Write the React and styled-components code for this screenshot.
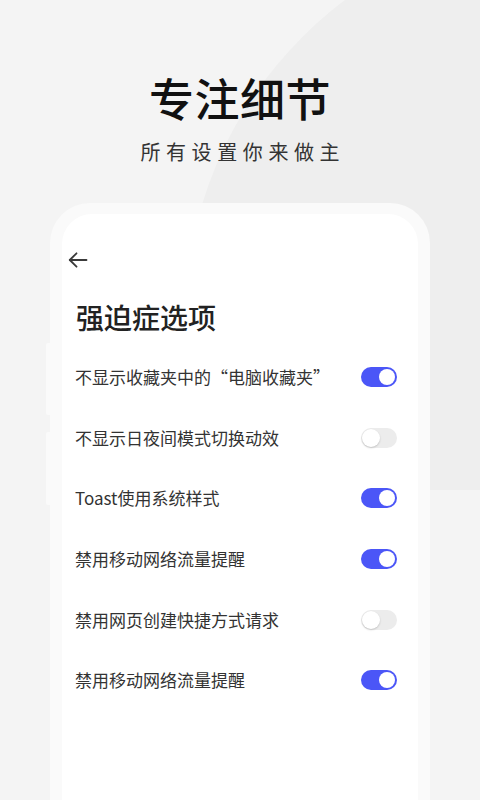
import styled, { createGlobalStyle } from 'styled-components'

const GlobalStyle = createGlobalStyle`
  html, body {
    margin: 0;
    padding: 0;
    background: #f4f4f4;
  }
  body {
    font-family: "Noto Sans CJK SC", "Noto Sans", sans-serif;
    -webkit-font-smoothing: antialiased;
  }
`

const Page = styled.div`
  position: relative;
  width: 480px;
  height: 800px;
  overflow: hidden;
  background: #f4f4f4;
  display: flex;
  flex-direction: column;
`

// big soft circle behind the header, cut flat at its lower end
const Backdrop = styled.div`
  position: absolute;
  top: 0;
  left: 0;
  width: 480px;
  height: 490px;
  overflow: hidden;
  pointer-events: none;

  &::before {
    content: '';
    position: absolute;
    left: 185px;
    top: -80px;
    width: 800px;
    height: 800px;
    border-radius: 50%;
    background: #eeeeee;
  }
`

const Hero = styled.header`
  position: relative;
  display: flex;
  flex-direction: column;
  align-items: center;
  padding-top: 75px;
`

const Title = styled.h1`
  margin: 0;
  font-size: 45px;
  line-height: 45px;
  font-weight: 500;
  color: #111;
  letter-spacing: 0.5px;
`

const Subtitle = styled.p`
  margin: 22px 0 0;
  font-size: 20px;
  line-height: 20px;
  color: #333;
  letter-spacing: 5.6px;
  padding-left: 5.6px;
`

const PhoneFrame = styled.div`
  position: relative;
  flex: 1;
  margin: 41px 50px 0;
  padding: 11px 12px 0;
  background: #fafafa;
  border-radius: 40px 40px 0 0;
  display: flex;

  &::before,
  &::after {
    content: '';
    position: absolute;
    left: -4px;
    width: 4px;
    background: #fafafa;
    border-radius: 2px 0 0 2px;
  }
  &::before {
    top: 140px;
    height: 72px;
  }
  &::after {
    top: 229px;
    height: 73px;
  }
`

const Screen = styled.div`
  flex: 1;
  background: #fff;
  border-radius: 30px 30px 0 0;
  padding: 38px 21px 0 13px;
  display: flex;
  flex-direction: column;
`

const BackButton = styled.button`
  align-self: flex-start;
  display: flex;
  margin: 0 0 0 -7px;
  padding: 0;
  border: 0;
  background: none;
  color: #3a3a3a;
  cursor: pointer;
`

const Heading = styled.h2`
  margin: 35px 0 16px 1px;
  font-size: 28px;
  line-height: 28px;
  font-weight: 500;
  color: #222;
`

const Row = styled.div`
  display: flex;
  align-items: center;
  justify-content: space-between;
  height: 60.6px;
`

const Label = styled.span`
  font-size: 17px;
  line-height: 20px;
  color: #333;
`

const Track = styled.button`
  position: relative;
  width: 36px;
  height: 20px;
  padding: 0;
  border: 0;
  border-radius: 10px;
  background: ${p => (p.$on ? '#4b56f7' : '#ececec')};
  cursor: pointer;
  flex-shrink: 0;
`

const Knob = styled.span`
  position: absolute;
  top: ${p => (p.$on ? '2px' : '1px')};
  left: ${p => (p.$on ? '18px' : '1px')};
  width: ${p => (p.$on ? '16px' : '18px')};
  height: ${p => (p.$on ? '16px' : '18px')};
  border-radius: 50%;
  background: #fff;
  box-shadow: ${p => (p.$on ? 'none' : '0 1px 2px rgba(0,0,0,0.18)')};
`

const options = [
  { label: '不显示收藏夹中的“电脑收藏夹”', on: true },
  { label: '不显示日夜间模式切换动效', on: false },
  { label: 'Toast使用系统样式', on: true },
  { label: '禁用移动网络流量提醒', on: true },
  { label: '禁用网页创建快捷方式请求', on: false },
  { label: '禁用移动网络流量提醒', on: true },
]

const BackArrow = () => (
  <svg width="20" height="16" viewBox="0 0 20 16" fill="none" stroke="currentColor" strokeWidth="1.8" strokeLinecap="round" strokeLinejoin="round">
    <path d="M18.5 8H1.8" />
    <path d="M8.5 1.3L1.8 8l6.7 6.7" />
  </svg>
)

const App = () => {
  return (
    <Page>
      <GlobalStyle />
      <Backdrop />
      <Hero>
        <Title>专注细节</Title>
        <Subtitle>所有设置你来做主</Subtitle>
      </Hero>
      <PhoneFrame>
        <Screen>
          <BackButton aria-label="返回">
            <BackArrow />
          </BackButton>
          <Heading>强迫症选项</Heading>
          {options.map((opt, i) => (
            <Row key={i}>
              <Label>{opt.label}</Label>
              <Track $on={opt.on} aria-pressed={opt.on}>
                <Knob $on={opt.on} />
              </Track>
            </Row>
          ))}
        </Screen>
      </PhoneFrame>
    </Page>
  )
}

export default App
